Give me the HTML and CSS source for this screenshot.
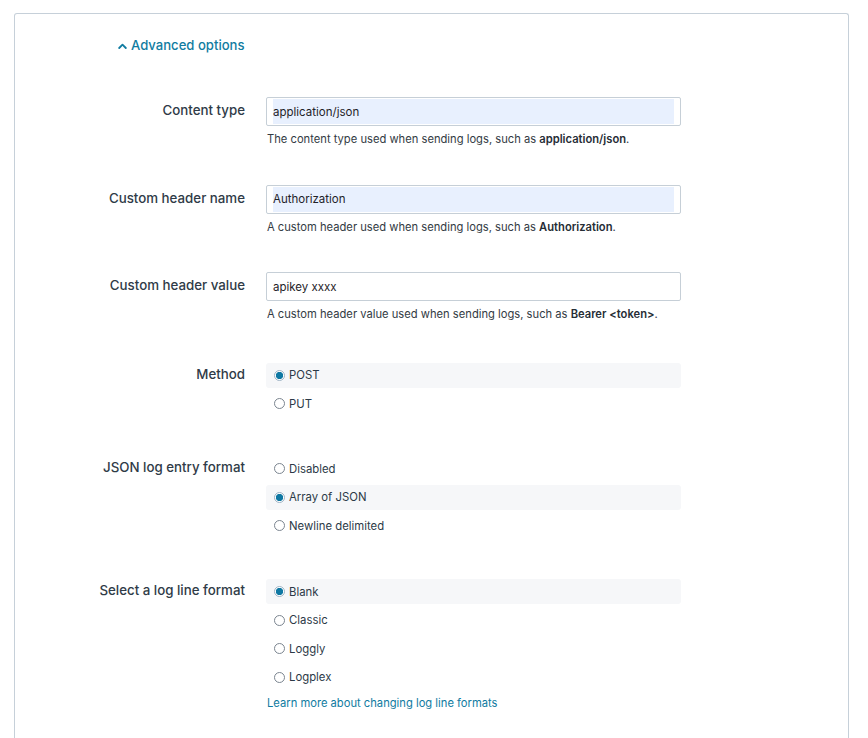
FILE: index.html
```html
<!DOCTYPE html>
<html lang="en">
<head>
<meta charset="utf-8">
<title>Advanced options</title>
<link rel="stylesheet" href="styles.css">
</head>
<body>
<div class="card">
  <div class="toggle-wrap">
    <a class="toggle" href="#">
      <svg class="chev" width="9" height="6" viewBox="0 0 9 6"><path d="M1.2 5 L4.5 1.7 L7.8 5" fill="none" stroke="currentColor" stroke-width="1.8" stroke-linecap="round" stroke-linejoin="round"/></svg>
      <span>Advanced options</span>
    </a>
  </div>

  <div class="form">
    <div class="row text-row">
      <div class="label">Content type</div>
      <div class="field">
        <div class="input"><span class="fill autofill">application/json</span></div>
        <div class="help">The content type used when sending logs, such as <b>application/json</b>.</div>
      </div>
    </div>

    <div class="row text-row">
      <div class="label">Custom header name</div>
      <div class="field">
        <div class="input"><span class="fill autofill">Authorization</span></div>
        <div class="help">A custom header used when sending logs, such as <b>Authorization</b>.</div>
      </div>
    </div>

    <div class="row text-row last-text">
      <div class="label">Custom header value</div>
      <div class="field">
        <div class="input"><span class="fill">apikey xxxx</span></div>
        <div class="help">A custom header value used when sending logs, such as <b>Bearer &lt;token&gt;</b>.</div>
      </div>
    </div>

    <div class="row radio-row">
      <div class="label">Method</div>
      <div class="field options">
        <div class="opt selected"><span class="radio on"></span>POST</div>
        <div class="opt"><span class="radio"></span>PUT</div>
      </div>
    </div>

    <div class="row radio-row json-row">
      <div class="label">JSON log entry format</div>
      <div class="field options">
        <div class="opt"><span class="radio"></span>Disabled</div>
        <div class="opt selected"><span class="radio on"></span>Array of JSON</div>
        <div class="opt"><span class="radio"></span>Newline delimited</div>
      </div>
    </div>

    <div class="row radio-row">
      <div class="label">Select a log line format</div>
      <div class="field options">
        <div class="opt selected"><span class="radio on"></span>Blank</div>
        <div class="opt"><span class="radio"></span>Classic</div>
        <div class="opt"><span class="radio"></span>Loggly</div>
        <div class="opt"><span class="radio"></span>Logplex</div>
        <a class="learn" href="#">Learn more about changing log line formats</a>
      </div>
    </div>
  </div>
</div>
</body>
</html>
```

FILE: styles.css
```css
html, body {
  margin: 0;
  padding: 0;
  background: #ffffff;
}

body {
  font-family: Inter, "Liberation Sans", Arial, sans-serif;
  color: #2c3a47;
  overflow: hidden;
}

.card {
  margin: 13px 19px 0 14px;
  border: 1px solid #c6d0d9;
  border-bottom: none;
  border-radius: 3px 3px 0 0;
  height: 760px;
  box-sizing: border-box;
  padding-top: 23px;
}

.toggle-wrap {
  display: flex;
  padding-left: 103px;
  height: 16px;
}

.toggle {
  display: flex;
  align-items: center;
  gap: 4px;
  color: #117ca1;
  text-decoration: none;
  font-size: 13.1px;
  font-weight: 500;
  line-height: 16px;
}

.chev {
  display: block;
  margin-top: 1px;
}

.form {
  margin-top: 44px;
  display: flex;
  flex-direction: column;
}

.row {
  display: grid;
  grid-template-columns: 230px 415px;
  column-gap: 21px;
}

.text-row {
  margin-bottom: 37.5px;
}

.text-row.last-text {
  margin-bottom: 40.5px;
}

.radio-row {
  margin-bottom: 40px;
}

.radio-row.json-row {
  margin-bottom: 41px;
}

.label {
  text-align: right;
  font-size: 13.3px;
  font-weight: 500;
  color: #2f3b47;
}

.text-row .label {
  line-height: 27px;
}

.radio-row .label {
  line-height: 22px;
}

.input {
  height: 29px;
  box-sizing: border-box;
  border: 1px solid #c6cfd7;
  border-radius: 2px;
  padding: 1px 6px;
  display: flex;
}

.fill {
  flex: 1;
  display: flex;
  align-items: center;
  font-size: 11.5px;
  color: #1f2329;
}

.autofill {
  background: #e8f0fe;
}

.help {
  margin-top: 5px;
  padding-left: 1px;
  font-size: 11.2px;
  line-height: 16px;
  color: #333b44;
}

.help b {
  font-weight: 600;
  color: #262d35;
}

.options {
  display: flex;
  flex-direction: column;
  gap: 3.5px;
}

.opt {
  height: 25px;
  display: flex;
  align-items: center;
  padding-left: 8px;
  border-radius: 3px;
  font-size: 11.35px;
  color: #2c3a47;
}

.opt.selected {
  background: #f6f7f9;
}

.radio {
  width: 11px;
  height: 11px;
  box-sizing: border-box;
  border-radius: 50%;
  border: 1px solid #7b8590;
  background: #ffffff;
  margin-right: 4px;
  flex: none;
}

.radio.on {
  border: 1px solid #9fb4c6;
  background: radial-gradient(circle, #0f78a3 0 3.4px, #ffffff 3.9px);
}

.learn {
  margin-top: 1.5px;
  padding-left: 1px;
  font-size: 11.2px;
  line-height: 16px;
  color: #0f7ba1;
  text-decoration: none;
}
```
